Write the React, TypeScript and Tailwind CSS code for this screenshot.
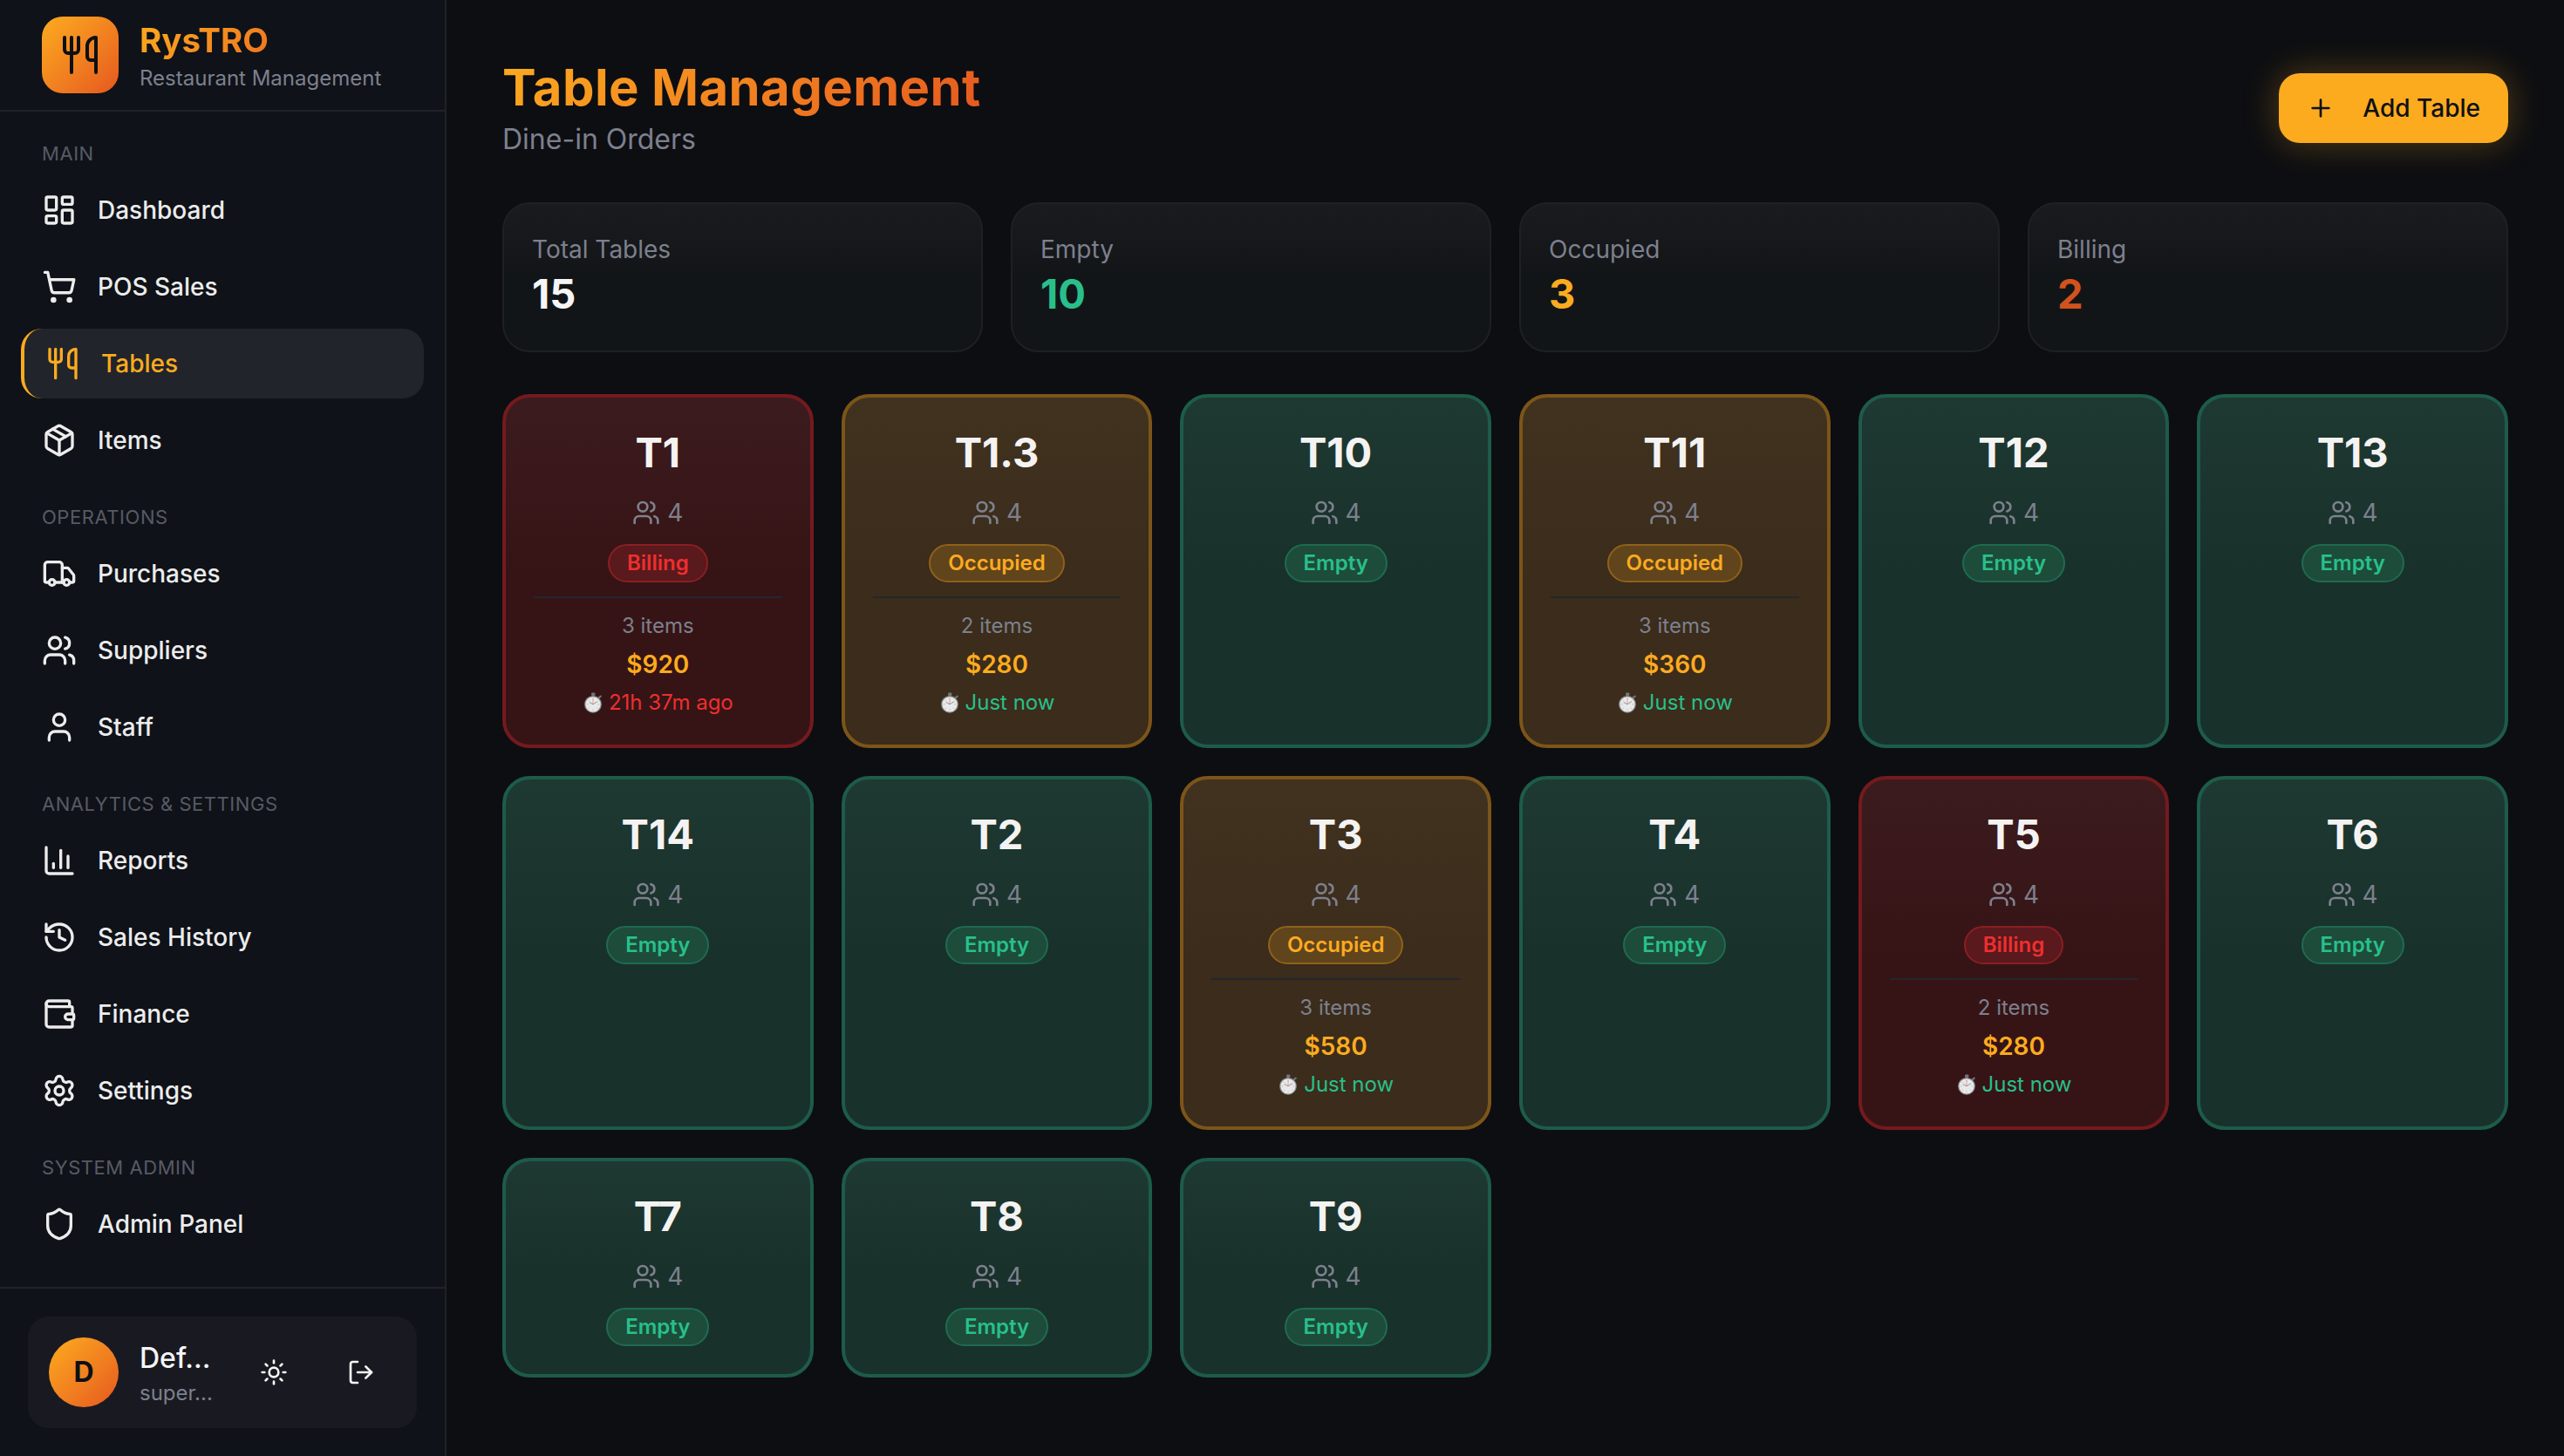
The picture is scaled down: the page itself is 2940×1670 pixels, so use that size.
import React from 'react';
import {
  ChartColumn,
  History,
  LayoutDashboard,
  LogOut,
  LucideIcon,
  Package,
  Plus,
  Settings,
  Shield,
  ShoppingCart,
  Sun,
  Truck,
  User,
  Users,
  Utensils,
  Wallet,
} from 'lucide-react';

type Status = 'Empty' | 'Occupied' | 'Billing';

interface NavItem {
  label: string;
  icon: LucideIcon;
  active?: boolean;
}

interface NavSection {
  title: string;
  items: NavItem[];
}

interface Order {
  items: number;
  total: string;
  time: string;
  late?: boolean;
}

interface Table {
  name: string;
  seats: number;
  status: Status;
  order?: Order;
}

const sections: NavSection[] = [
  {
    title: 'MAIN',
    items: [
      { label: 'Dashboard', icon: LayoutDashboard },
      { label: 'POS Sales', icon: ShoppingCart },
      { label: 'Tables', icon: Utensils, active: true },
      { label: 'Items', icon: Package },
    ],
  },
  {
    title: 'OPERATIONS',
    items: [
      { label: 'Purchases', icon: Truck },
      { label: 'Suppliers', icon: Users },
      { label: 'Staff', icon: User },
    ],
  },
  {
    title: 'ANALYTICS & SETTINGS',
    items: [
      { label: 'Reports', icon: ChartColumn },
      { label: 'Sales History', icon: History },
      { label: 'Finance', icon: Wallet },
      { label: 'Settings', icon: Settings },
    ],
  },
  {
    title: 'SYSTEM ADMIN',
    items: [{ label: 'Admin Panel', icon: Shield }],
  },
];

const stats = [
  { label: 'Total Tables', value: '15', color: 'text-[#f5f5f5]' },
  { label: 'Empty', value: '10', color: 'text-[#28c08a]' },
  { label: 'Occupied', value: '3', color: 'text-[#fcab1f]' },
  { label: 'Billing', value: '2', color: 'text-[#d2521e]' },
];

const tables: Table[] = [
  { name: 'T1', seats: 4, status: 'Billing', order: { items: 3, total: '$920', time: '21h 37m ago', late: true } },
  { name: 'T1.3', seats: 4, status: 'Occupied', order: { items: 2, total: '$280', time: 'Just now' } },
  { name: 'T10', seats: 4, status: 'Empty' },
  { name: 'T11', seats: 4, status: 'Occupied', order: { items: 3, total: '$360', time: 'Just now' } },
  { name: 'T12', seats: 4, status: 'Empty' },
  { name: 'T13', seats: 4, status: 'Empty' },
  { name: 'T14', seats: 4, status: 'Empty' },
  { name: 'T2', seats: 4, status: 'Empty' },
  { name: 'T3', seats: 4, status: 'Occupied', order: { items: 3, total: '$580', time: 'Just now' } },
  { name: 'T4', seats: 4, status: 'Empty' },
  { name: 'T5', seats: 4, status: 'Billing', order: { items: 2, total: '$280', time: 'Just now' } },
  { name: 'T6', seats: 4, status: 'Empty' },
  { name: 'T7', seats: 4, status: 'Empty' },
  { name: 'T8', seats: 4, status: 'Empty' },
  { name: 'T9', seats: 4, status: 'Empty' },
];

const cardStyles: Record<Status, string> = {
  Empty: 'border-[#1d5c48] from-[#1e3932] to-[#19312b]',
  Occupied: 'border-[#7c5519] from-[#413220] to-[#3b2c1b]',
  Billing: 'border-[#741a1e] from-[#3c1b1e] to-[#361416]',
};

const badgeStyles: Record<Status, string> = {
  Empty: 'border-[#1f6b50] bg-[#1d4c3b] text-[#28c08a]',
  Occupied: 'border-[#8f611a] bg-[#60441c] text-[#fcab1f]',
  Billing: 'border-[#8a1f23] bg-[#5a191c] text-[#ee2f2f]',
};

const Stopwatch: React.FC = () => (
  <svg viewBox="0 0 20 24" className="w-5 h-6 shrink-0">
    <rect x="8" y="0.5" width="4.4" height="3.6" rx="1" fill="#70757a" />
    <path d="M16.4 6.4l2.4-1.8" stroke="#70757a" strokeWidth="2" strokeLinecap="round" />
    <circle cx="10" cy="13.8" r="9.9" fill="#8b8f93" />
    <circle cx="10" cy="13.8" r="8.6" fill="#e9e9e9" />
    <path
      d="M10 6.6v1.4M10 19.4v1.4M3 13.8h1.4M15.6 13.8h1.4M5.1 8.9l.9.9M14 17.8l.9.9M5.1 18.7l.9-.9"
      stroke="#a6a6a6"
      strokeWidth="0.8"
    />
    <path d="M10 13.8V7.2" stroke="#e58a78" strokeWidth="0.8" />
    <path d="M6 11.6L10 13.8l4.8-3" fill="none" stroke="#7b7f82" strokeWidth="0.8" strokeLinecap="round" />
  </svg>
);

const NavLink: React.FC<NavItem> = ({ label, icon: Icon, active }) => (
  <a
    className={
      active
        ? 'flex h-20 items-center gap-6 rounded-[24px] border-l-4 border-[#fcab1f] bg-[#21242b] px-6 text-[#fcab1f]'
        : 'flex h-20 items-center gap-6 rounded-[24px] px-6 text-[#ececec]'
    }
  >
    <Icon className="size-10" />
    <span className="text-[28px] leading-10 font-medium">{label}</span>
  </a>
);

const Sidebar: React.FC = () => (
  <aside className="flex w-[512px] shrink-0 flex-col border-r-2 border-[#1f2125] bg-[#0f1218]">
    <div className="flex h-32 shrink-0 items-center gap-6 border-b-2 border-[#212327] px-12">
      <div className="flex size-[88px] items-center justify-center rounded-[24px] bg-linear-135 from-[#fcab1f] to-[#e5571f] text-[#0e1014]">
        <Utensils className="size-12" />
      </div>
      <div>
        <h1 className="w-fit bg-linear-135 from-[#fcab1f] to-[#ee741f] bg-clip-text text-[38.5px] leading-[52px] font-bold text-transparent">
          RysTRO
        </h1>
        <p className="pt-0.5 text-[24px] leading-8 text-[#7d808d]">Restaurant Management</p>
      </div>
    </div>

    <nav className="flex flex-1 flex-col gap-8 px-6 pt-8">
      {sections.map((section) => (
        <div key={section.title}>
          <h3 className="mb-2 px-6 text-[22px] leading-[33px] tracking-wide text-[#575a65]">{section.title}</h3>
          <div className="flex flex-col gap-2">
            {section.items.map((item) => (
              <NavLink key={item.label} {...item} />
            ))}
          </div>
        </div>
      ))}
    </nav>

    <div className="border-t-2 border-[#212327] p-8">
      <div className="flex h-32 items-center rounded-[24px] bg-[#191a21] px-6">
        <div className="flex size-20 shrink-0 items-center justify-center rounded-full bg-linear-135 from-[#fcab1f] to-[#e5571f] text-[32px] font-bold text-[#0e1014]">
          D
        </div>
        <div className="ml-6 w-[90px]">
          <p className="truncate text-[32px] leading-[48px] font-medium text-[#f5f5f5]">Def...</p>
          <p className="truncate text-[24px] leading-8 text-[#7d808d]">super...</p>
        </div>
        <div className="ml-6 flex gap-5 text-[#f5f5f5]">
          <button className="flex size-20 items-center justify-center">
            <Sun className="size-8" />
          </button>
          <button className="flex size-20 items-center justify-center">
            <LogOut className="size-8" />
          </button>
        </div>
      </div>
    </div>
  </aside>
);

const TableCard: React.FC<Table> = ({ name, seats, status, order }) => (
  <div
    className={`flex flex-col items-center rounded-[32px] border-4 bg-linear-to-b to-50% p-8 ${cardStyles[status]}`}
  >
    <h3 className="pb-0.5 text-[47px] leading-[62px] font-bold text-[#f5f3f1]">{name}</h3>
    <div className="mt-4 flex items-center gap-2 text-[#7d808d]">
      <Users className="size-8" />
      <span className="text-[28px] leading-10">{seats}</span>
    </div>
    <span
      className={`mt-4 rounded-full border-2 px-5 py-1 text-[24px] leading-8 font-semibold ${badgeStyles[status]}`}
    >
      {status}
    </span>
    {order && (
      <div className="mt-4 flex w-full flex-col items-center gap-2 border-t-2 border-[#24262d] pt-4">
        <p className="text-[24px] leading-8 text-[#7d808d]">{order.items} items</p>
        <p className="text-[28px] leading-10 font-semibold text-[#fcab1f]">{order.total}</p>
        <p
          className={`flex items-center gap-2 pl-0.5 text-[24px] leading-8 ${
            order.late ? 'text-[#ee2f2f]' : 'text-[#28c08a]'
          }`}
        >
          <Stopwatch />
          {order.time}
        </p>
      </div>
    )}
  </div>
);

const App: React.FC = () => {
  return (
    <div className="flex h-[1670px] w-[2940px] overflow-hidden bg-[#0d0e12] font-['Inter',sans-serif]">
      <Sidebar />

      <main className="flex-1 px-16 pt-16">
        <header className="flex h-[120px] items-center justify-between">
          <div>
            <h2 className="w-fit bg-linear-135 from-[#fcab1f] to-[#e5571f] bg-clip-text text-[58px] leading-[72px] font-bold tracking-[0.4px] text-transparent">
              Table Management
            </h2>
            <p className="text-[32px] leading-[48px] text-[#7d808d]">Dine-in Orders</p>
          </div>
          <button className="flex h-20 items-center gap-8 rounded-[24px] bg-[#fcab1f] px-8 text-[28px] font-medium text-[#0e1014] shadow-[0_0_40px_rgba(252,171,31,0.3)]">
            <Plus className="size-8" />
            Add Table
          </button>
        </header>

        <section className="mt-12 grid grid-cols-4 gap-8">
          {stats.map((stat) => (
            <div
              key={stat.label}
              className="rounded-[32px] border-2 border-[#1e2024] bg-linear-to-b from-[#1a1b1e] to-[#121518] to-50% p-8"
            >
              <p className="text-[28px] leading-10 text-[#7d808d]">{stat.label}</p>
              <p className={`pb-0.5 text-[47px] leading-[62px] font-bold ${stat.color}`}>{stat.value}</p>
            </div>
          ))}
        </section>

        <section className="mt-12 grid grid-cols-6 gap-8">
          {tables.map((table) => (
            <TableCard key={table.name} {...table} />
          ))}
        </section>
      </main>
    </div>
  );
};

export default App;
